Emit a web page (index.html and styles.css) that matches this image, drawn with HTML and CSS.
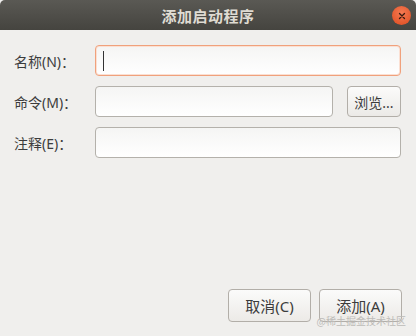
FILE: index.html
```html
<!DOCTYPE html>
<html lang="zh-CN">
<head>
  <meta charset="UTF-8">
  <title>添加启动程序</title>
  <link rel="stylesheet" href="styles.css">
</head>
<body>
  <div class="dialog">
    <!-- Title bar -->
    <div class="titlebar">
      <span class="title">添加启动程序</span>
      <span class="close">
        <svg width="16" height="16" viewBox="0 0 16 16">
          <path d="M5.5 5.5 L10.5 10.5 M10.5 5.5 L5.5 10.5" stroke="#3a1a10" stroke-width="1.3" stroke-linecap="round"/>
        </svg>
      </span>
    </div>

    <!-- Fields -->
    <div class="form">
      <label class="label">名称(N)：</label>
      <div class="entry focused"><span class="caret"></span></div>

      <label class="label">命令(M)：</label>
      <div class="entry-row">
        <div class="entry"></div>
        <button class="btn browse">浏览...</button>
      </div>

      <label class="label">注释(E)：</label>
      <div class="entry"></div>
    </div>

    <!-- Actions -->
    <div class="actions">
      <button class="btn action">取消(C)</button>
      <button class="btn action">添加(A)</button>
    </div>

    <span class="watermark">@稀土掘金技术社区</span>
  </div>
</body>
</html>
```

FILE: styles.css
```css
body {
  margin: 0;
  font-family: "Noto Sans", "Noto Sans CJK SC", sans-serif;
  background-color: #f0efed;
}

.dialog {
  position: relative;
  width: 416px;
  height: 336px;
  display: flex;
  flex-direction: column;
  background-color: #f0efed;
  overflow: hidden;
}

.titlebar {
  position: relative;
  height: 30px;
  flex-shrink: 0;
  display: flex;
  align-items: center;
  justify-content: center;
  background: linear-gradient(#5a5954, #45443f);
  border-radius: 5px 5px 0 0;
}

.title {
  color: #dfdbd2;
  font-size: 15px;
  font-weight: bold;
  letter-spacing: 0.5px;
}

.close {
  position: absolute;
  right: 5px;
  top: 6px;
  width: 19px;
  height: 19px;
  border-radius: 50%;
  background: radial-gradient(circle at 50% 35%, #f47a52, #df4b1f);
  display: flex;
  align-items: center;
  justify-content: center;
}

.form {
  display: grid;
  grid-template-columns: 81px 1fr;
  row-gap: 10px;
  padding: 15px 15px 0 14px;
  align-items: center;
}

.label {
  font-size: 14px;
  color: #3c3c3c;
}

.entry {
  height: 29px;
  border: 1px solid #b4b1ab;
  border-radius: 4px;
  background: linear-gradient(#f5f5f4, #ffffff);
  box-sizing: content-box;
  display: flex;
  align-items: center;
}

.entry.focused {
  border-color: #f0a17c;
  box-shadow: 0 0 0 1px #fbe0d3 inset;
}

.caret {
  width: 1px;
  height: 20px;
  margin-left: 7px;
  background-color: #333;
}

.entry-row {
  display: flex;
  gap: 14px;
}

.entry-row .entry {
  flex: 1;
}

.btn {
  font-family: "Noto Sans", "Noto Sans CJK SC", sans-serif;
  font-size: 14px;
  color: #3c3c3c;
  border: 1px solid #b2aea8;
  border-radius: 4px;
  background: linear-gradient(#fbfbfa, #eceae7);
  padding: 0;
  cursor: pointer;
}

.browse {
  width: 54px;
  height: 31px;
}

.actions {
  margin-top: auto;
  display: flex;
  justify-content: flex-end;
  gap: 8px;
  padding: 0 14px 14px 0;
}

.action {
  width: 83px;
  height: 33px;
  font-size: 15px;
}

.watermark {
  position: absolute;
  right: 10px;
  bottom: 9px;
  font-size: 10px;
  line-height: 12px;
  color: #bdbbb8;
  font-family: "Noto Sans CJK SC", sans-serif;
}
```
